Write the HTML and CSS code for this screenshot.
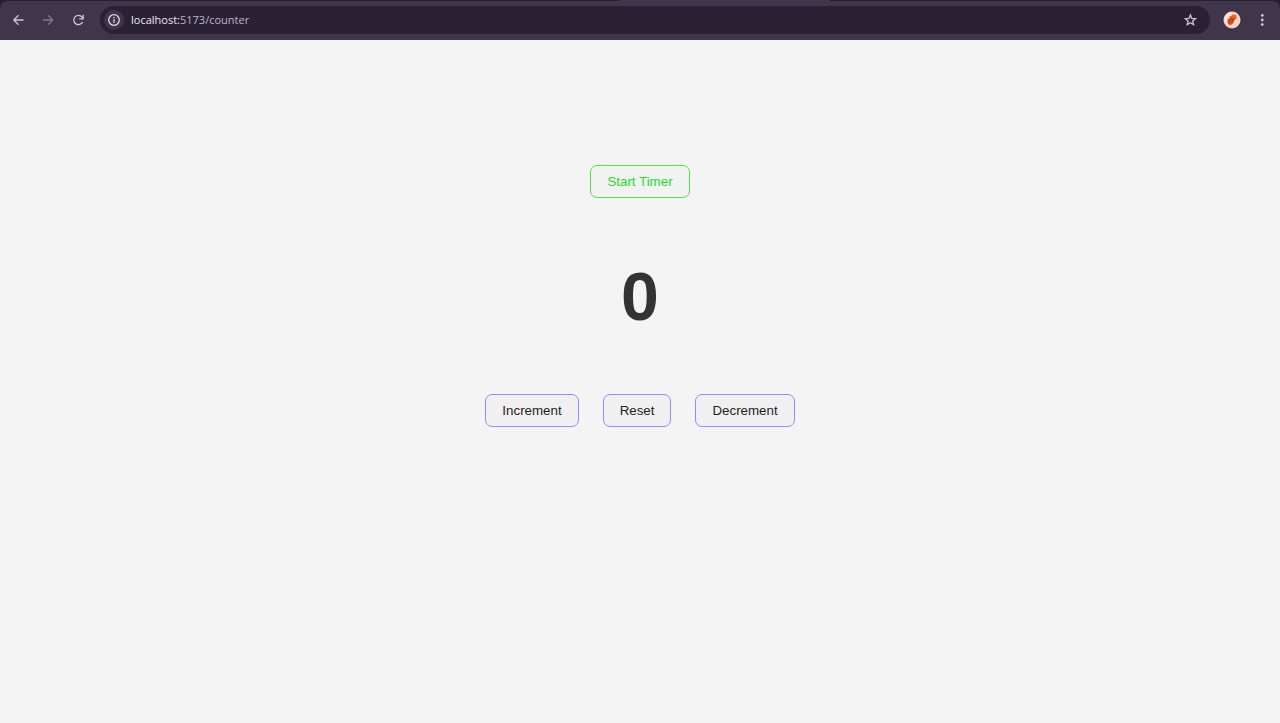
FILE: index.html
```html
<!DOCTYPE html>
<html lang="en">
<head>
<meta charset="utf-8">
<meta name="viewport" content="width=device-width, initial-scale=1">
<title>Counter</title>
<link rel="stylesheet" href="styles.css">
</head>
<body>
<header class="browser">
  <div class="toolbar">
    <nav class="nav" aria-label="History">
      <button class="tool" type="button" aria-label="Back"><svg class="icon" viewBox="0 0 16 16"><path d="M13.5 8H4M8.5 3.3 3.8 8l4.7 4.7"/></svg></button>
      <button class="tool tool-dim" type="button" aria-label="Forward"><svg class="icon" viewBox="0 0 16 16"><path d="M3 8h9.5M8 3.3 12.7 8 8 12.7"/></svg></button>
      <button class="tool" type="button" aria-label="Reload"><svg class="icon" viewBox="0 0 16 16"><path d="M12.6 10A4.6 4.6 0 1 1 12 5.1L13.2 6.6M13.2 2.8v4H9.2"/></svg></button>
    </nav>
    <div class="omnibox">
      <button class="tool site-info" type="button" aria-label="Site information"><svg class="icon" viewBox="0 0 16 16"><circle cx="8" cy="8" r="5.3"/><path d="M8 7.2v3.5M8 5v1.2"/></svg></button>
      <a class="address" href="#"><span class="host">localhost:</span>5173/counter</a>
      <button class="tool" type="button" aria-label="Bookmark"><svg class="icon" viewBox="0 0 16 16"><path d="m8.4 3 1.4 3.4 3.7.3-2.8 2.4.9 3.6-3.2-1.9-3.2 1.9.9-3.6-2.8-2.4 3.7-.3z"/></svg></button>
    </div>
    <div class="actions">
      <button class="tool" type="button" aria-label="Profile"><svg class="avatar" viewBox="0 0 18 18"><circle cx="9" cy="9" r="8.5" fill="#fbd0c6"/><circle cx="8" cy="8" r="6.5" fill="#fde6df"/><path d="m6.5 5.2 2-.4L9.3 3.6l4 .3.6 3.6-1.8 1-2 3.4-3-1z" fill="#ee6620"/><path d="m4.8 8 3.4-1.4 2.4 2-.2 3.4-2.6 2.2-2.6-1-.8-2.2z" fill="#d94a18"/><path d="m8 6.2 2.6 1.4 1.8-.8-1.9 3.4-2.2-1.4z" fill="#c94012"/></svg></button>
      <button class="tool" type="button" aria-label="Menu"><svg class="icon icon-solid" viewBox="0 0 16 16"><circle cx="8.3" cy="3.4" r="1.4"/><circle cx="8.3" cy="8" r="1.4"/><circle cx="8.3" cy="12.6" r="1.4"/></svg></button>
    </div>
  </div>
</header>
<main class="counter">
  <button class="btn btn-start" type="button">Start Timer</button>
  <h1 class="count">0</h1>
  <div class="controls">
    <button class="btn" type="button">Increment</button>
    <button class="btn" type="button">Reset</button>
    <button class="btn" type="button">Decrement</button>
  </div>
</main>
</body>
</html>
```
FILE: styles.css
```css
* { box-sizing: border-box; }
body {
  margin: 0;
  min-height: 100vh;
  background: #f4f4f4;
  color: #333;
  font-family: "Liberation Sans", Arial, sans-serif;
}
.browser { background: linear-gradient(90deg, #292036 620px, #43384f 620px, #43384f 830px, #292036 830px); }
.toolbar {
  display: flex;
  align-items: center;
  height: 40px;
  padding: 0 6px 1px;
  gap: 10px;
  border-top: 1px solid transparent;
  border-radius: 8px 8px 0 0;
  background: #40364c;
  background-clip: padding-box;
}
.nav { display: flex; gap: 6px; }
.tool {
  display: grid;
  place-items: center;
  flex: none;
  width: 24px;
  height: 24px;
  padding: 0;
  border: 0;
  border-radius: 50%;
  background: none;
  color: #cdc5d8;
}
.tool-dim { color: #81778c; }
.icon {
  width: 16px;
  height: 16px;
  fill: none;
  stroke: currentColor;
  stroke-width: 1.3;
}
.icon-solid { fill: currentColor; stroke: none; }
.avatar { width: 18px; height: 18px; }
.omnibox {
  display: flex;
  align-items: center;
  flex: 1;
  height: 28px;
  padding: 0 8px 0 2px;
  border-radius: 14px;
  background: #2a2135;
}
.site-info { width: 20px; height: 20px; margin: 0 2px; background: #40364c; color: #e3dcec; }
.address {
  flex: 1;
  padding-left: 5px;
  color: #bdb5c8;
  font: 11px/16px "Open Sans", "Noto Sans", sans-serif;
  text-decoration: none;
}
.host { color: #eee9f4; }
.actions { display: flex; gap: 6px; }
.counter {
  display: flex;
  flex-direction: column;
  align-items: center;
  padding: 125px 16px 16px;
}
.btn {
  padding: 8px 16px;
  border: 1px solid #8e8eff;
  border-radius: 7px;
  background: #f0f0f0;
  color: #222;
  font-family: inherit;
  line-height: 15px;
}
.btn-start { border-color: #4be24b; background: #f2f2f2; color: #1fdd1f; }
.count {
  margin: 50px 0;
  font-size: 68px;
  line-height: 96px;
}
.controls { display: flex; flex-wrap: wrap; gap: 24px; }
```
